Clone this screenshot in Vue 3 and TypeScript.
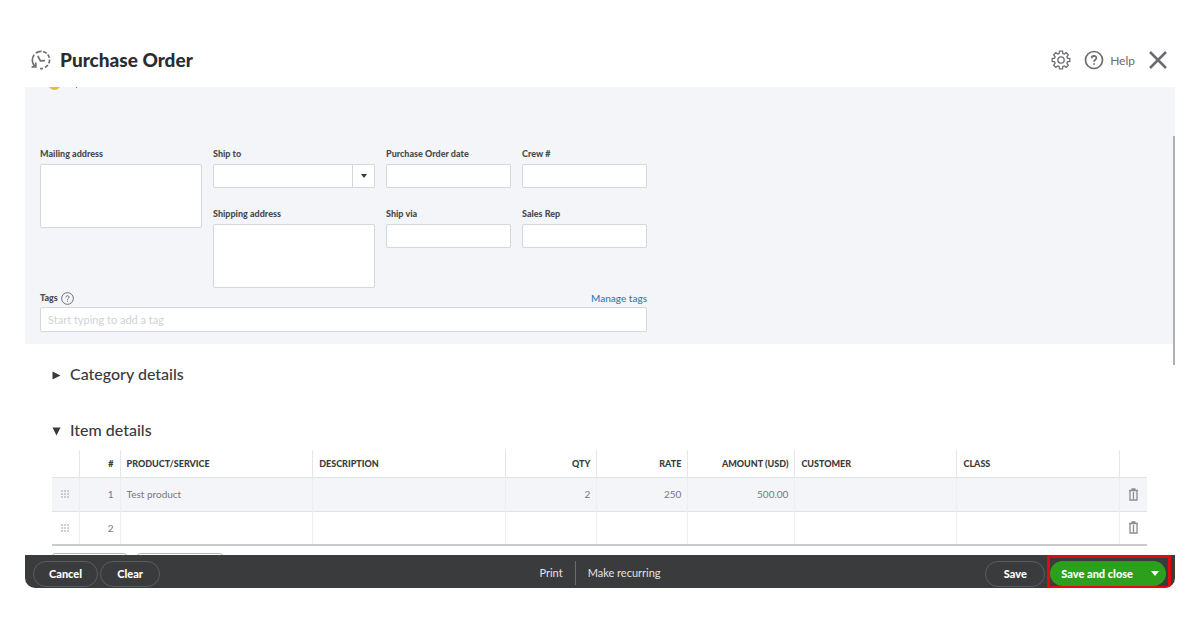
<script setup lang="ts">
import { ref } from 'vue'

interface Column {
  key: string
  label: string
  numeric?: boolean
}

interface Line {
  id: number
  product: string
  description: string
  qty: string
  rate: string
  amount: string
  customer: string
  class: string
}

const columns: Column[] = [
  { key: 'id', label: '#', numeric: true },
  { key: 'product', label: 'PRODUCT/SERVICE' },
  { key: 'description', label: 'DESCRIPTION' },
  { key: 'qty', label: 'QTY', numeric: true },
  { key: 'rate', label: 'RATE', numeric: true },
  { key: 'amount', label: 'AMOUNT (USD)', numeric: true },
  { key: 'customer', label: 'CUSTOMER' },
  { key: 'class', label: 'CLASS' },
]

const lines = ref<Line[]>([
  { id: 1, product: 'Test product', description: '', qty: '2', rate: '250', amount: '500.00', customer: '', class: '' },
  { id: 2, product: '', description: '', qty: '', rate: '', amount: '', customer: '', class: '' },
])

const cell = (line: Line, key: string) => line[key as keyof Line]
const removeLine = (id: number) => {
  lines.value = lines.value.filter((l) => l.id !== id)
}
</script>

<template>
  <div class="page">
    <header class="header">
      <svg class="history" viewBox="0 0 20 20" aria-hidden="true">
        <path d="M3.8 16.2A8.6 8.6 0 0 1 3.2 4.7" />
        <path d="M4.8 3.1A8.6 8.6 0 0 1 10.6 1.4" />
        <path d="M12.2 1.7A8.6 8.6 0 0 1 15.6 3.4M16.7 4.5A8.6 8.6 0 0 1 18.4 7.9M18.6 9.6A8.6 8.6 0 0 1 17.8 13.4M16.9 15A8.6 8.6 0 0 1 13.9 17.5M12 18.3A8.6 8.6 0 0 1 9 18.5" />
        <path d="M.6 16.8H4.8V12.6M6.8 5.8L9.4 10.8L14 10.6" />
      </svg>
      <h1>Purchase Order</h1>
      <button class="icon-button gear" type="button" aria-label="Settings">
        <svg viewBox="0 0 20 20" aria-hidden="true">
          <path d="M8.5 1.2h3l.4 2.4 1.3.5 2-1.4 2.1 2.1-1.4 2 .5 1.3 2.4.4v3l-2.4.4-.5 1.3 1.4 2-2.1 2.1-2-1.4-1.3.5-.4 2.4h-3l-.4-2.4-1.3-.5-2 1.4-2.1-2.1 1.4-2-.5-1.3-2.4-.4v-3l2.4-.4.5-1.3-1.4-2 2.1-2.1 2 1.4 1.3-.5z" />
          <circle cx="10" cy="10" r="3.2" />
        </svg>
      </button>
      <button class="icon-button help" type="button">
        <svg viewBox="0 0 20 20" aria-hidden="true">
          <circle cx="10" cy="10" r="8.5" />
          <path d="M7.6 8.2C7.6 5 12.4 5 12.4 8.1C12.4 9.8 10 9.8 10 11.8M10 13.2V14.8" />
        </svg>
        Help
      </button>
      <button class="icon-button close" type="button" aria-label="Close">
        <svg viewBox="0 0 20 20" aria-hidden="true"><path d="M2 2L18 18M18 2L2 18" /></svg>
      </button>
    </header>

    <main class="content">
      <form class="form" @submit.prevent>
        <div class="status"><i class="dot"></i><i class="tick"></i></div>
        <div class="fields">
          <div class="column">
            <div class="field">
              <label for="mailing">Mailing address</label>
              <textarea id="mailing"></textarea>
            </div>
          </div>
          <div class="column">
            <div class="field">
              <label for="ship-to">Ship to</label>
              <div class="picker">
                <select id="ship-to"><option value=""></option></select>
                <span class="arrow"><svg viewBox="0 0 6 4" aria-hidden="true"><path d="M0 0H6L3 4Z" /></svg></span>
              </div>
            </div>
            <div class="field">
              <label for="shipping">Shipping address</label>
              <textarea id="shipping"></textarea>
            </div>
          </div>
          <div class="column">
            <div class="field">
              <label for="date">Purchase Order date</label>
              <input id="date" type="text" />
            </div>
            <div class="field">
              <label for="via">Ship via</label>
              <input id="via" type="text" />
            </div>
          </div>
          <div class="column">
            <div class="field">
              <label for="crew">Crew #</label>
              <input id="crew" type="text" />
            </div>
            <div class="field">
              <label for="rep">Sales Rep</label>
              <input id="rep" type="text" />
            </div>
          </div>
        </div>
        <div class="tags">
          <div class="tags-head">
            <label for="tags">Tags</label>
            <svg viewBox="0 0 20 20" aria-hidden="true">
              <circle cx="10" cy="10" r="9" />
              <path d="M7.6 8.2C7.6 5 12.4 5 12.4 8.1C12.4 9.8 10 9.8 10 11.8M10 13.2V14.8" />
            </svg>
            <a href="#">Manage tags</a>
          </div>
          <input id="tags" type="text" placeholder="Start typing to add a tag" />
        </div>
      </form>

      <section class="details">
        <h2>
          <button type="button" aria-expanded="false">
            <svg viewBox="0 0 9 9" aria-hidden="true"><path d="M.5 .5L8.5 4.5L.5 8.5Z" /></svg>
            Category details
          </button>
        </h2>
        <h2>
          <button type="button" aria-expanded="true">
            <svg viewBox="0 0 9 9" aria-hidden="true"><path d="M.5 .5H8.5L4.5 8.5Z" /></svg>
            Item details
          </button>
        </h2>
        <table>
          <colgroup>
            <col class="w-grip" />
            <col class="w-id" />
            <col class="w-product" />
            <col />
            <col class="w-qty" />
            <col class="w-qty" />
            <col class="w-amount" />
            <col class="w-customer" />
            <col class="w-customer" />
            <col class="w-trash" />
          </colgroup>
          <thead>
            <tr>
              <th></th>
              <th v-for="c in columns" :key="c.key" scope="col" :class="{ numeric: c.numeric }">{{ c.label }}</th>
              <th></th>
            </tr>
          </thead>
          <tbody>
            <tr v-for="line in lines" :key="line.id">
              <td class="icon-cell">
                <svg class="grip" viewBox="0 0 8 8" aria-hidden="true">
                  <path d="M0 1H2M3 1H5M6 1H8M0 4H2M3 4H5M6 4H8M0 7H2M3 7H5M6 7H8" />
                </svg>
              </td>
              <td v-for="c in columns" :key="c.key" :class="{ numeric: c.numeric }">{{ cell(line, c.key) }}</td>
              <td class="icon-cell">
                <button class="trash" type="button" aria-label="Delete line" @click="removeLine(line.id)">
                  <svg viewBox="0 0 9 13" aria-hidden="true"><path d="M0 2.5H9M2.5 1H6.5M1 3V12H8V3M4.5 4V11" /></svg>
                </button>
              </td>
            </tr>
          </tbody>
        </table>
        <div class="peek"><i class="peek-a"></i><i class="peek-b"></i></div>
      </section>
      <i class="thumb"></i>
    </main>

    <footer class="footer">
      <div class="group start">
        <button class="pill" type="button">Cancel</button>
        <button class="pill" type="button">Clear</button>
      </div>
      <div class="group middle">
        <button class="plain" type="button">Print</button>
        <button class="plain" type="button">Make recurring</button>
      </div>
      <div class="group end">
        <button class="pill" type="button">Save</button>
        <div class="highlight">
          <div class="split">
            <button type="button">Save and close</button>
            <button type="button" aria-label="More save options">
              <svg viewBox="0 0 8 5" aria-hidden="true"><path d="M0 0H8L4 5Z" /></svg>
            </button>
          </div>
        </div>
      </div>
    </footer>
  </div>
</template>

<style>
body {
  margin: 0;
  background: #fff;
}
</style>

<style scoped>
* {
  box-sizing: border-box;
}
.page {
  padding: 33px 25px;
  color: #393a3d;
  font-family: Lato, "Liberation Sans", sans-serif;
  font-size: 11px;
}
button,
input,
select,
textarea {
  margin: 0;
  font: inherit;
  color: inherit;
}
button {
  padding: 0;
  border: 0;
  background: none;
}
svg {
  display: block;
  flex: none;
  fill: none;
  stroke: currentColor;
}
.header {
  display: flex;
  align-items: center;
  height: 54px;
  padding: 0 7px 0 6px;
}
.history {
  width: 20px;
  height: 20px;
  color: #707175;
  stroke-width: 1.7;
}
h1 {
  flex: 1;
  margin: 0 0 0 9px;
  font-size: 19px;
  font-weight: 900;
  line-height: 24px;
  color: #2b2c2f;
}
.icon-button {
  display: flex;
  align-items: center;
  color: #6b6c70;
}
.icon-button svg {
  width: 20px;
  height: 20px;
  stroke-width: 1.7;
}
.gear {
  margin-right: 13px;
}
.icon-button.gear svg {
  stroke-width: 1.3;
}
.help {
  gap: 6px;
  margin-right: 13px;
  font-size: 12px;
}
.icon-button.close svg {
  stroke-width: 2.5;
}
.content {
  position: relative;
}
.form {
  padding: 0 15px 12px;
  background: #f3f5f9;
}
.status {
  display: flex;
  align-items: flex-end;
  gap: 15px;
  height: 3px;
  padding-left: 8px;
  overflow: hidden;
}
.dot {
  width: 13px;
  height: 13px;
  border-radius: 50%;
  background: #e8bd3c;
}
.tick {
  align-self: flex-start;
  width: 1px;
  height: 1px;
  background: #77787c;
}
.fields {
  display: grid;
  grid-template-columns: 162fr 162fr 125fr 125fr;
  gap: 11px;
  max-width: 607px;
  padding-top: 58px;
}
.column {
  display: grid;
  align-content: start;
  gap: 20px;
}
.field {
  display: grid;
  gap: 4px;
}
label {
  font-size: 9px;
  font-weight: 900;
  line-height: 12px;
  color: #4a4b4f;
}
input,
select,
textarea {
  display: block;
  width: 100%;
  height: 24px;
  padding: 0 7px;
  border: 1px solid #d4d7db;
  border-radius: 2px;
  background: #fff;
}
textarea {
  height: 64px;
  resize: none;
}
.picker {
  position: relative;
}
select {
  appearance: none;
}
.arrow {
  position: absolute;
  inset: 0 0 0 auto;
  display: grid;
  place-items: center;
  width: 23px;
  border-left: 1px solid #d4d7db;
  pointer-events: none;
}
.arrow svg {
  width: 6px;
  height: 4px;
  fill: currentColor;
  stroke: none;
}
.tags {
  max-width: 607px;
  padding-top: 2px;
}
.tags-head {
  display: flex;
  align-items: center;
  gap: 3px;
  height: 16px;
  margin-bottom: 1px;
}
.tags-head svg {
  width: 13px;
  height: 13px;
  stroke-width: 1.5;
  color: #6b6c72;
}
.tags-head a {
  margin-left: auto;
  font-size: 10px;
  font-weight: 500;
  color: #2f7cb6;
  text-decoration: none;
}
.tags input {
  height: 25px;
}
input::placeholder {
  color: #d0d2d5;
  opacity: 1;
}
.details {
  padding: 18px 28px 0 27px;
}
h2 {
  margin: 0 0 32px;
  font-size: 16px;
  font-weight: 500;
  line-height: 24px;
}
h2 + h2 {
  margin-bottom: 8px;
}
h2 button {
  display: flex;
  align-items: center;
  gap: 9px;
}
h2 svg {
  width: 9px;
  height: 9px;
  margin-top: 2px;
  fill: currentColor;
  stroke: none;
}
table {
  width: 100%;
  table-layout: fixed;
  border-collapse: collapse;
}
.w-grip {
  width: 27px;
}
.w-trash {
  width: 28px;
}
.w-id {
  width: 41px;
}
.w-product {
  width: 17.6%;
}
.w-qty {
  width: 91px;
}
.w-amount {
  width: 107px;
}
.w-customer {
  width: 14.8%;
}
th,
td {
  padding: 0 6px;
  border-left: 1px solid #eceef1;
  text-align: left;
  white-space: nowrap;
}
th {
  height: 27px;
  border-left-color: #e4e6e9;
  font-size: 9px;
  font-weight: 900;
}
td {
  height: 34px;
  border-top: 1px solid #dfe2e6;
  font-size: 10px;
  color: #77787c;
}
th:first-child,
td:first-child {
  border-left: 0;
}
tbody tr:nth-child(odd) {
  background: #f3f5f9;
}
tbody tr:last-child td {
  border-bottom: 2px solid #c9cbcd;
}
.numeric {
  text-align: right;
}
td.icon-cell {
  padding: 0;
}
.icon-cell svg {
  margin: 0 auto;
}
.grip {
  width: 8px;
  height: 8px;
  color: #a0a2a7;
}
.trash {
  display: block;
  margin: 0 auto;
  color: #8b8c90;
}
.trash svg {
  width: 9px;
  height: 13px;
  stroke-width: 1.3;
}
.peek {
  display: flex;
  gap: 10px;
  height: 9px;
  padding-top: 7px;
  overflow: hidden;
}
.peek i {
  height: 24px;
  border: 1px solid #b5b7ba;
  border-radius: 3px;
}
.peek-a {
  width: 75px;
}
.peek-b {
  width: 86px;
}
.thumb {
  position: absolute;
  top: 49px;
  right: 0;
  width: 2px;
  height: 229px;
  background: #adafb1;
}
.footer {
  display: grid;
  grid-template-columns: 1fr auto 1fr;
  height: 33px;
  padding: 0 4px;
  border-radius: 0 0 10px 10px;
  background: #3a3b3c;
  color: #fff;
  overflow: hidden;
}
.group {
  display: flex;
  align-items: center;
  gap: 2px;
}
.start {
  padding-left: 4px;
}
.end {
  justify-content: flex-end;
}
.pill {
  min-width: 60px;
  height: 26px;
  margin-top: 4px;
  padding: 0 15px;
  border: 1px solid #5c5d60;
  border-radius: 13px;
  font-weight: 900;
}
.plain {
  height: 24px;
  margin-top: 2px;
  padding: 0 12px;
  color: #e2e3e4;
}
.middle {
  gap: 0;
}
.plain + .plain {
  border-left: 1px solid #6b6c72;
}
.highlight {
  height: 33px;
  padding: 3px 2px 0 0;
  border: solid #e00b12;
  border-width: 3px 3px 2px;
}
.split {
  display: flex;
  height: 25px;
  border-radius: 13px;
  background: #2ca01c;
  font-weight: 900;
}
.split button {
  padding: 0 11px;
}
.split button + button {
  padding: 0 7px;
}
.split svg {
  width: 8px;
  height: 5px;
  fill: currentColor;
  stroke: none;
}
</style>
